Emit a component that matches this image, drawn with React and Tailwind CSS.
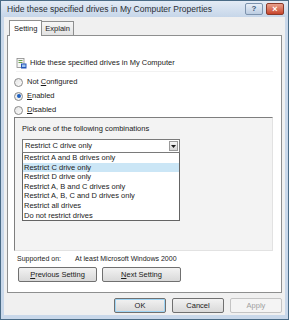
const items = [
  'Restrict A and B drives only',
  'Restrict C drive only',
  'Restrict D drive only',
  'Restrict A, B and C drives only',
  'Restrict A, B, C and D drives only',
  'Restrict all drives',
  'Do not restrict drives',
]

function Radio({ checked, children }) {
  return (
    <div className="flex items-center h-[14px] gap-[4px]">
      <span className="w-[9px] h-[9px] rounded-full border border-[#8a8a8a] bg-gradient-to-br from-[#e4e4e4] to-[#fbfbfb] flex items-center justify-center">
        {checked && <span className="w-[4px] h-[4px] rounded-full bg-[#1d5fbf]" />}
      </span>
      <span>{children}</span>
    </div>
  )
}

function Btn({ children, className = '', disabled }) {
  return (
    <div
      className={
        'h-[15px] rounded-[2px] border flex items-center justify-center ' +
        (disabled
          ? 'border-[#c4c4c4] bg-[#f4f4f4] text-[#a0a0a0] '
          : 'border-[#707070] bg-gradient-to-b from-[#f2f2f2] to-[#d9d9d9] ') +
        className
      }
    >
      {children}
    </div>
  )
}

function PolicyIcon() {
  return (
    <svg width="11" height="11" viewBox="0 0 11 11">
      <rect x="1" y="0.5" width="7" height="9" fill="#f6f6f6" stroke="#8a8a8a" strokeWidth="0.8" />
      <rect x="2.5" y="2" width="4" height="1" fill="#6aa04a" />
      <rect x="2.5" y="4" width="4" height="1" fill="#6aa04a" />
      <rect x="5" y="5.5" width="5.5" height="5" fill="#2457b8" />
      <rect x="6" y="6.5" width="3.5" height="2.5" fill="#9cc4ee" />
    </svg>
  )
}

export default function App() {
  return (
    <div className="w-[289px] h-[320px] bg-[#c9d8ea] border border-[#4a6b86] flex flex-col text-[7.5px] text-[#1a1a1a] font-['Liberation_Sans',Arial,sans-serif] overflow-hidden">
      {/* title bar */}
      <div className="h-[16px] flex items-center pl-[6px] pr-[4px] bg-gradient-to-b from-[#e3ebf5] to-[#c6d6e9] shrink-0">
        <span className="text-[8.5px] text-[#2a2f36] flex-1 truncate">Hide these specified drives in My Computer Properties</span>
        <div className="flex gap-[3px]">
          <div className="w-[18px] h-[12px] rounded-[2px] border border-[#7d93ad] bg-gradient-to-b from-[#e8eef6] to-[#bccde2] flex items-center justify-center text-[8px] font-bold text-[#3c5677]">?</div>
          <div className="w-[18px] h-[12px] rounded-[2px] border border-[#8a3a2a] bg-gradient-to-b from-[#e8a08c] to-[#c7432a] flex items-center justify-center text-[9px] font-bold text-white leading-none">×</div>
        </div>
      </div>

      {/* client */}
      <div className="mx-[3px] h-[298px] bg-[#f0f0f0] flex flex-col">
        {/* tabs */}
        <div className="flex items-end pl-[5px] h-[18px] pt-[2px]">
          <div className="h-[16px] px-[4px] border border-b-0 border-[#8e8f8f] bg-white flex items-center relative z-10 -mb-px">Setting</div>
          <div className="h-[14px] px-[3px] border border-b-0 border-l-0 border-[#8e8f8f] bg-gradient-to-b from-[#f6f6f6] to-[#e3e3e3] flex items-center">Explain</div>
        </div>

        {/* panel */}
        <div className="mx-[3px] h-[258px] border border-[#8e8f8f] bg-white flex flex-col">
          <div className="flex items-center gap-[3px] mt-[21px] ml-[8px] h-[12px]">
            <PolicyIcon />
            <span>Hide these specified drives in My Computer</span>
          </div>
          <div className="mx-[8px] mt-[2px] border-t border-[#f2f2f2]" />

          <div className="flex flex-col mt-[3px] ml-[6px]">
            <Radio>
              Not <span className="underline">C</span>onfigured
            </Radio>
            <Radio checked>
              <span className="underline">E</span>nabled
            </Radio>
            <Radio>
              <span className="underline">D</span>isabled
            </Radio>
          </div>

          {/* options box */}
          <div className="ml-[6px] w-[259px] h-[134px] border-t border-l border-[#7e7e7e] border-r border-b border-r-[#e2e2e2] border-b-[#e2e2e2] bg-[#f3f3f3] flex flex-col px-[7px]">
            <div className="mt-[6px] h-[10px] flex items-center">Pick one of the following combinations</div>
            <div className="mt-[5px] w-[158px] h-[14px] border border-[#7a7a7a] bg-white flex items-center">
              <span className="flex-1 pl-[2px]">Restrict C drive only</span>
              <div className="w-[9px] h-[10px] mr-[1px] border border-[#9a9a9a] bg-gradient-to-b from-[#f4f4f4] to-[#d6d6d6] flex items-center justify-center">
                <svg width="5" height="3" viewBox="0 0 5 3">
                  <path d="M0 0 L5 0 L2.5 3 Z" fill="#1a1a1a" />
                </svg>
              </div>
            </div>
            <div className="w-[158px] border border-[#646464] border-t-0 bg-white flex flex-col">
              {items.map((t, i) => (
                <div key={t} className={'h-[9.6px] flex items-center pl-[1px] leading-none ' + (i === 1 ? 'bg-[#cbe6f6]' : '')}>
                  {t}
                </div>
              ))}
            </div>
          </div>

          <div className="flex items-center h-[10px] mt-[3px] ml-[9px] text-[7px]">
            <span className="w-[58px]">Supported on:</span>
            <span>At least Microsoft Windows 2000</span>
          </div>

          <div className="flex gap-[5px] ml-[10px] mt-[3px]">
            <Btn className="w-[79px]">
              <span><span className="underline">P</span>revious Setting</span>
            </Btn>
            <Btn className="w-[79px]">
              <span><span className="underline">N</span>ext Setting</span>
            </Btn>
          </div>
        </div>

        {/* bottom buttons */}
        <div className="flex justify-end gap-[6px] mt-[5px] pr-[3px]">
          <Btn className="w-[52px] border-[#3c7fb1] shadow-[inset_0_0_0_1px_#9fd5f5]">OK</Btn>
          <Btn className="w-[52px]">Cancel</Btn>
          <Btn className="w-[52px]" disabled>Apply</Btn>
        </div>
      </div>
    </div>
  )
}
